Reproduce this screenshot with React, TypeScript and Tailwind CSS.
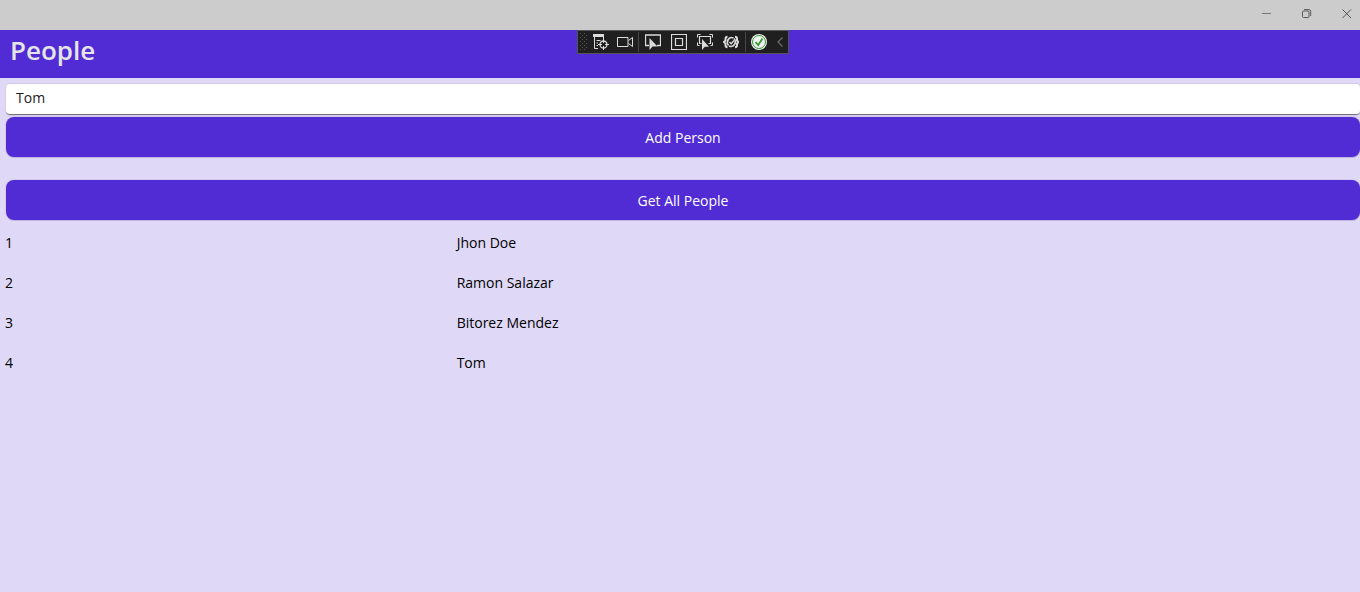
import { useState } from "react";
import type { ReactNode } from "react";

type Person = { id: number; name: string };

const people: Person[] = [
  { id: 1, name: "Jhon Doe" },
  { id: 2, name: "Ramon Salazar" },
  { id: 3, name: "Bitorez Mendez" },
  { id: 4, name: "Tom" },
];

function ToolButton({ label, narrow, children }: { label: string; narrow?: boolean; children: ReactNode }) {
  return (
    <button
      type="button"
      aria-label={label}
      className={narrow ? "flex h-6 w-6 items-center justify-center" : "flex h-6 w-[26px] items-center justify-center"}
    >
      <svg width="16" height="16" viewBox="0 0 16 16" fill="none" stroke="#dcdcdc" aria-hidden="true">
        {children}
      </svg>
    </button>
  );
}

function WindowBar() {
  return (
    <div className="flex h-[30px] items-start justify-end overflow-hidden bg-[#cccccc]">
      <button type="button" aria-label="Minimize" className="flex h-7 w-10 items-center justify-center">
        <svg width="10" height="10" fill="none" stroke="#777777" aria-hidden="true">
          <path d="M0 4.5h9" />
        </svg>
      </button>
      <button type="button" aria-label="Restore" className="flex h-7 w-10 items-center justify-center">
        <svg width="10" height="10" fill="none" stroke="#5a5a5a" aria-hidden="true">
          <rect x="0.5" y="2" width="6.5" height="6.5" rx="1" />
          <path d="M2 .6h5q1.7 0 1.7 1.7V7" />
        </svg>
      </button>
      <button type="button" aria-label="Close" className="-mr-[7px] flex h-7 w-10 items-center justify-center">
        <svg width="10" height="10" fill="none" stroke="#555555" aria-hidden="true">
          <path d="M.5.5l8.500 8.500m0-8.500l-8.500 8.500" />
        </svg>
      </button>
    </div>
  );
}

function DebugToolbar() {
  return (
    <div
      role="toolbar"
      aria-label="Debug tools"
      className="absolute top-0 left-1/2 -ml-[103px] flex h-6 items-center border border-[#555555] bg-[#1f1f1f]"
    >
      <svg width="9" height="18" className="mr-0.5" fill="#505050" aria-hidden="true">
        {[0, 4, 8, 12, 16].map((y) => (
          <g key={y}>
            <rect x="2" y={y} width="1" height="1" />
            <rect x="6" y={y} width="1" height="1" />
            <rect x="4" y={y + 2} width="1" height="1" />
            <rect x="8" y={y + 2} width="1" height="1" />
          </g>
        ))}
      </svg>
      <ToolButton label="Go to Live Visual Tree" narrow>
        <path d="M0 1.5h11" strokeWidth="3" />
        <path d="M1.5 3v11.500H5M10.500 3v2M3.500 6.500h4M3.500 9h1.500M3.500 11.500h1.500" />
        <circle cx="10.5" cy="10.5" r="3.5" strokeWidth="1.3" />
        <path d="M10.500 5v4M10.500 12v4M5 10.500h4M12 10.500h4" />
      </ToolButton>
      <ToolButton label="Show in XAML Live Preview" narrow>
        <path d="M.5 3.500h10.500v9H.5zM11.500 6.500l4-3v9l-4-3" />
      </ToolButton>
      <span className="mx-px h-5 w-px bg-[#464646]" />
      <ToolButton label="Select Element">
        <path d="M4 11.500H.5V1h15v10.500H12" strokeWidth="1.3" />
        <path d="M4.500 4v12l3-3.500h5z" fill="#dcdcdc" stroke="none" />
      </ToolButton>
      <ToolButton label="Display Layout Adorners">
        <path d="M.5.5h15v15H.5zM4.500 4.500h7v7h-7z" strokeWidth="1.2" />
      </ToolButton>
      <ToolButton label="Track Focused Element">
        <path d="M.5 3.500V.5h3M12.500.5h3v3M.5 8.500v3h2M13.500 11.500h2v-3" />
        <path d="M4.500 9.500h-2v-7h11v7h-2" strokeWidth="1.2" />
        <path d="M5 5v11l2.800-3.200h4.200z" fill="#dcdcdc" stroke="none" />
      </ToolButton>
      <ToolButton label="Hot Reload Options">
        <path
          d="M4.500 2.800Q2.500 2.800 2.500 5v1.500L1 8l1.500 1.500V11q0 2.200 2 2.200M12 2.800q2 0 2 2.200v1.500L15.500 8 14 9.500V11q0 2.200-2 2.200"
          strokeWidth="2"
        />
        <path d="M10.500 4Q7 2.500 5.200 5.500T5.500 11.500M6 12q3.500 1.500 5.500-1.500T11 4.500" strokeWidth="1.6" />
        <path d="M6.500 8l1.700 1.800L11 6.500" strokeWidth="1.4" />
      </ToolButton>
      <span className="ml-px h-5 w-px bg-[#464646]" />
      <ToolButton label="Hot Reload Available">
        <circle cx="8" cy="8" r="8" fill="#f1f1f1" stroke="none" />
        <circle cx="8" cy="8" r="6.5" stroke="#339933" />
        <path d="M4.500 8l2.700 3L11.500 4.500" stroke="#339933" strokeWidth="1.8" />
      </ToolButton>
      <button type="button" aria-label="Collapse toolbar" className="flex h-6 w-4 items-center justify-center">
        <svg width="6" height="10" fill="none" stroke="#6a6a6a" strokeWidth="1.3" aria-hidden="true">
          <path d="M5.500.5L1 5l4.500 4.500" />
        </svg>
      </button>
    </div>
  );
}

export default function App() {
  const [name, setName] = useState("Tom");
  const button =
    "h-10 w-full rounded-lg bg-[#512bd4] pt-0.5 text-sm text-white shadow-[0_1px_0_#bfb6df,0_0_0_1px_#d3cbef]";
  return (
    <div className="min-h-screen overflow-x-hidden bg-[#dfd8f7] font-['Open_Sans',sans-serif] text-sm text-black">
      <WindowBar />
      <header className="relative flex h-12 items-start bg-[#512bd4] px-2.5">
        <h1 className="text-[26px] leading-10 font-semibold text-[#e5e5e5]">People</h1>
        <DebugToolbar />
      </header>
      <main className="pt-1.5 pl-1.5">
        <input
          aria-label="Person name"
          value={name}
          onChange={(e) => setName(e.target.value)}
          className="block h-[31px] w-full rounded border-b border-[#77737f] bg-white px-2.5 pb-1 text-[#202020] shadow-[0_0_0_1px_#d3cce9] outline-none"
        />
        <div className="flex flex-col gap-[23px] pt-0.5">
          <button type="button" className={button}>Add Person</button>
          <button type="button" className={button}>Get All People</button>
        </div>
        <table
          aria-label="People"
          className="mt-[3px] -ml-px w-[calc(100%+1px)] table-fixed border-collapse text-left"
        >
          <tbody>
            {people.map((p) => (
              <tr key={p.id} className="h-10">
                <td className="w-1/3 p-0">{p.id}</td>
                <td className="p-0">{p.name}</td>
              </tr>
            ))}
          </tbody>
        </table>
      </main>
    </div>
  );
}
